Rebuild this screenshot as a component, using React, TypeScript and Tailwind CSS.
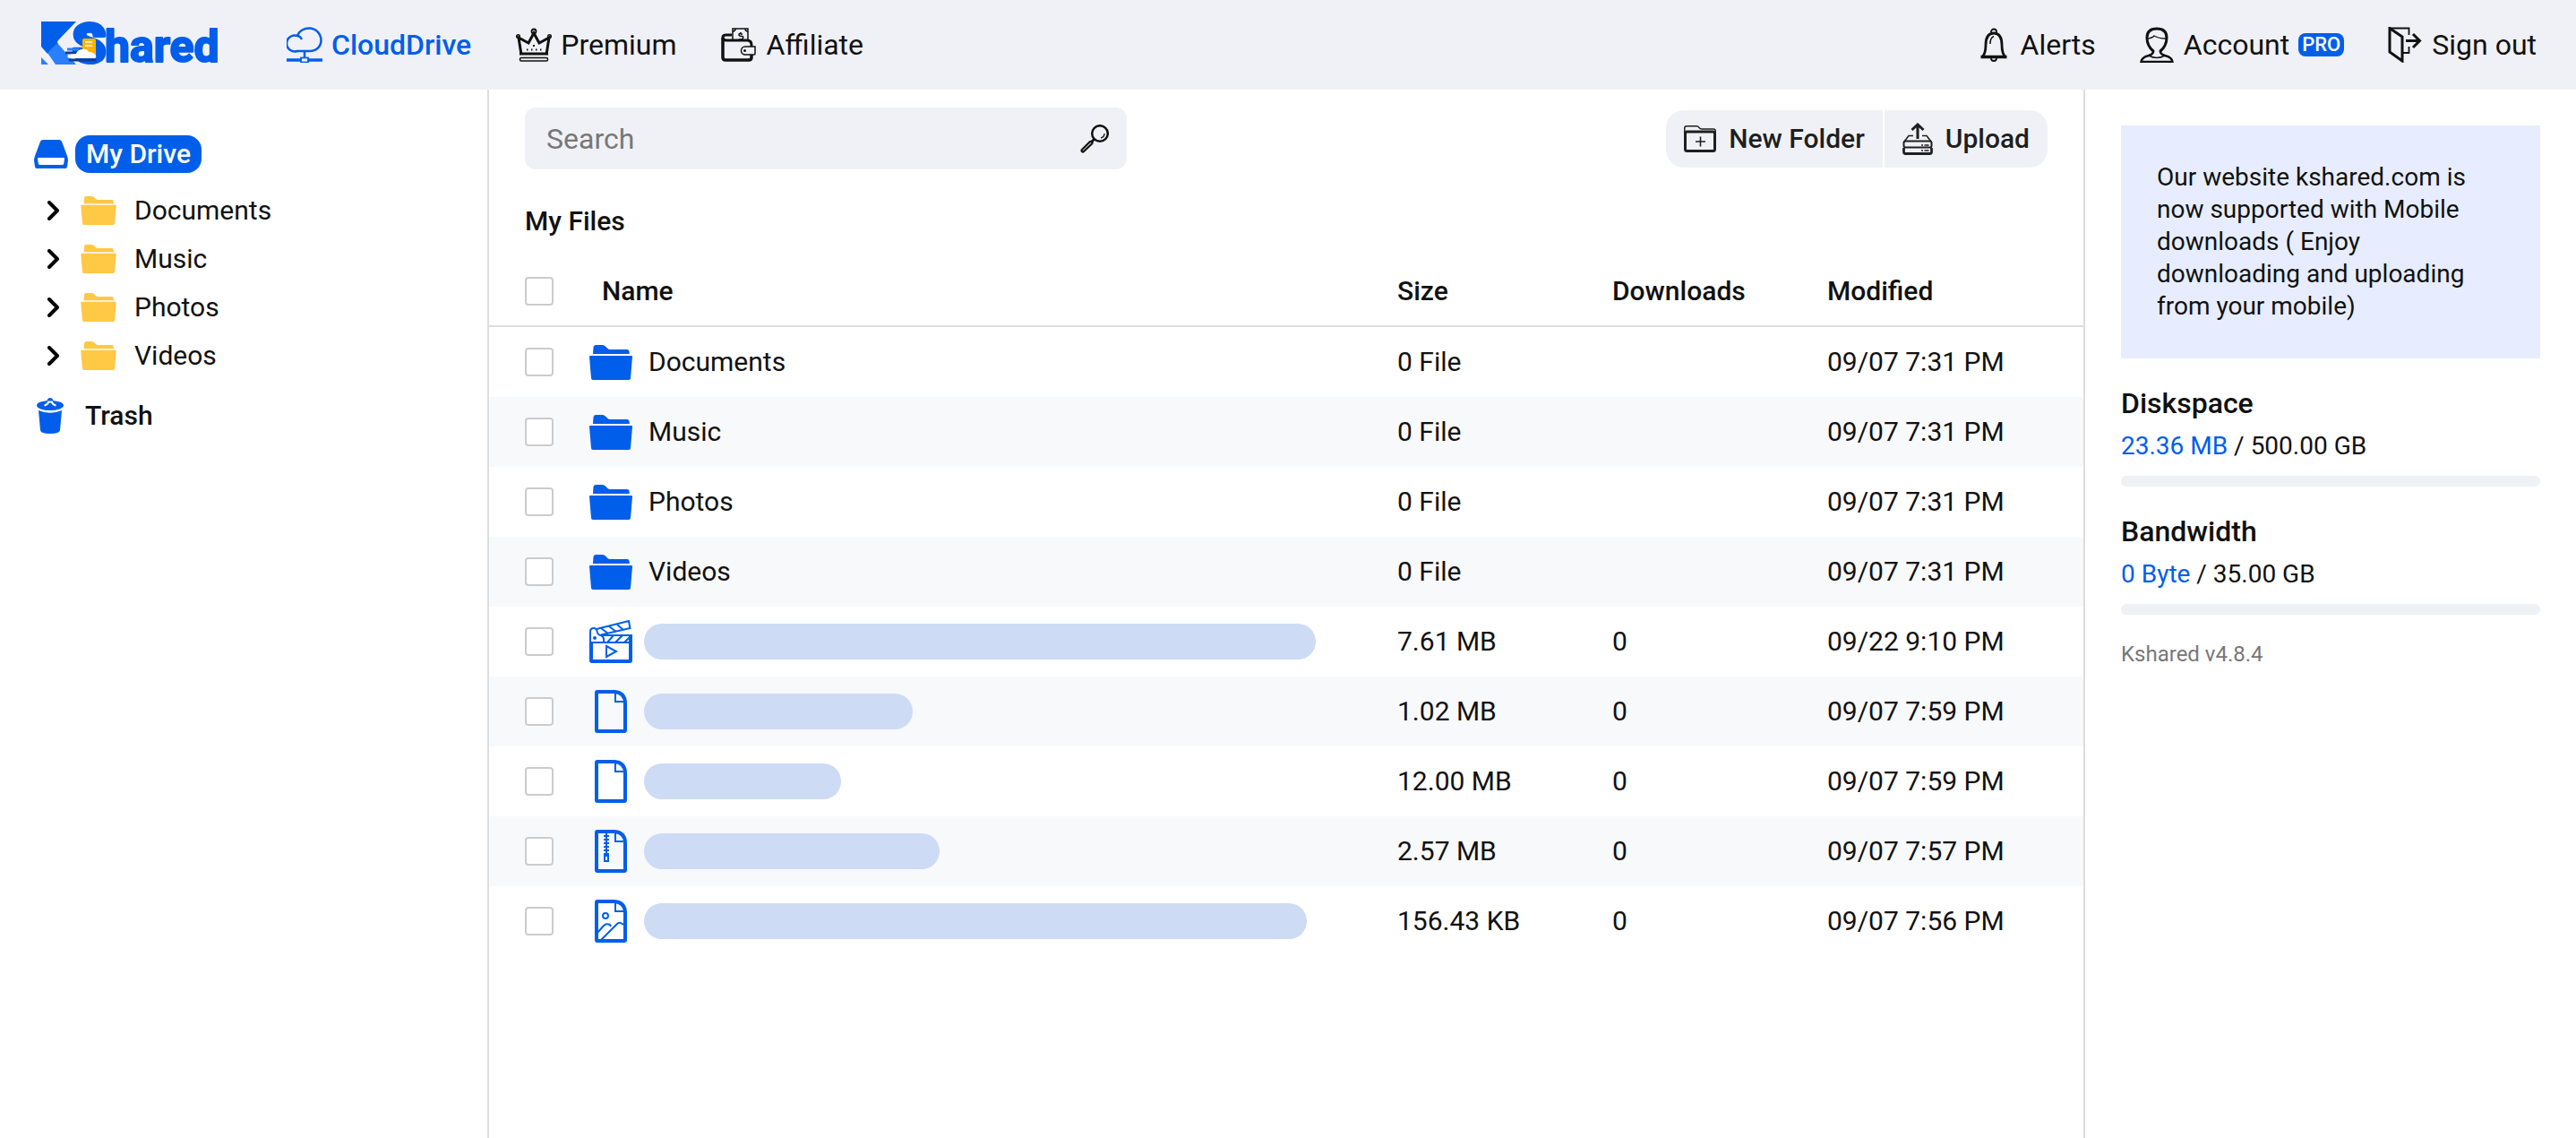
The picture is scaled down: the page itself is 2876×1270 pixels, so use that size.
import { useState, type ReactNode } from "react";

const TREE = ["Documents", "Music", "Photos", "Videos"];

type FileKind = "folder" | "video" | "file" | "zip" | "image";

interface Entry {
  id: string;
  kind: FileKind;
  name?: string;
  bar?: string;
  size: string;
  downloads: string;
  modified: string;
}

// Entries with a bar have their name hidden
const ENTRIES: Entry[] = [
  { id: "documents", kind: "folder", name: "Documents", size: "0 File", downloads: "", modified: "09/07 7:31 PM" },
  { id: "music",     kind: "folder", name: "Music",     size: "0 File", downloads: "", modified: "09/07 7:31 PM" },
  { id: "photos",    kind: "folder", name: "Photos",    size: "0 File", downloads: "", modified: "09/07 7:31 PM" },
  { id: "videos",    kind: "folder", name: "Videos",    size: "0 File", downloads: "", modified: "09/07 7:31 PM" },
  { id: "f1", kind: "video", bar: "w-[750px]", size: "7.61 MB",   downloads: "0", modified: "09/22 9:10 PM" },
  { id: "f2", kind: "file",  bar: "w-[300px]", size: "1.02 MB",   downloads: "0", modified: "09/07 7:59 PM" },
  { id: "f3", kind: "file",  bar: "w-[220px]", size: "12.00 MB",  downloads: "0", modified: "09/07 7:59 PM" },
  { id: "f4", kind: "zip",   bar: "w-[330px]", size: "2.57 MB",   downloads: "0", modified: "09/07 7:57 PM" },
  { id: "f5", kind: "image", bar: "w-[740px]", size: "156.43 KB", downloads: "0", modified: "09/07 7:56 PM" },
];

function Logo() {
  return (
    <svg viewBox="0 -13 204 80" className="h-20 w-[204px]" role="img" aria-label="KShared">
      <path d="M0 1h39L19 22q-2 2 0 4L7 37 0 29z" fill="#005eea" />
      <path d="M7 36 18 25l21 24H16z" fill="#2a7fff" />
      <path d="M0 41l8 8H0z" fill="#2a7fff" />
      <g fontFamily="Roboto, sans-serif" fill="#005eea" stroke="#005eea" strokeLinejoin="round">
        <text x="35" y="46" fontSize="59" fontWeight="900" strokeWidth="5">S</text>
        <text x="71" y="46" fontSize="50" fontWeight="700" strokeWidth="2">hared</text>
      </g>
      <path d="M48 20h11q2 0 2 2v18H46V22q0-2 2-2z" fill="#ffb300" />
      <path d="M49 24h8M49 28h8" stroke="#fff" strokeWidth="1.5" />
      <path d="M29 32h13" stroke="#2a7fff" strokeWidth="3" />
      <path d="M27 36h12" stroke="#0b3f91" strokeWidth="3" />
      <path d="M32 44h28" stroke="#0b3f91" strokeWidth="3" strokeLinecap="round" />
      <path d="M32 42q-4-1-2-3 2-2 9-2 2-5 7-5 5-1 7 3 6 0 8 4 1 3-2 3z" fill="#fff" />
    </svg>
  );
}

function CloudIcon() {
  return (
    <svg viewBox="0 0 40 40" className="size-10" fill="none" stroke="currentColor">
      <path d="M12 27A9 9 0 1 1 12 10C14 4 20 1.500 25 1.500 33 1.500 38.500 8 38.500 15S33 27 26 27z" strokeWidth="2.500" />
      <path d="M12 10q3 0 5 4" strokeWidth="2.500" />
      <path d="M20 27v7" strokeWidth="2.500" />
      <path d="M0 37h16M24 37h16" strokeWidth="3.500" />
      <rect x="16" y="34.500" width="8" height="5" strokeWidth="1.800" />
    </svg>
  );
}

function CrownIcon() {
  return (
    <svg viewBox="0 0 40 40" className="size-10" fill="none" stroke="currentColor">
      <circle cx="20" cy="5" r="2.500" strokeWidth="1.800" />
      <circle cx="2.500" cy="10.500" r="1.800" strokeWidth="1.500" />
      <circle cx="37.500" cy="10.500" r="1.800" strokeWidth="1.500" />
      <path d="M6 31 3 12l11 6 6-11 6 11 11-6-3 19" strokeWidth="3" />
      <path d="M4 30h32" strokeWidth="3" />
      <rect x="4.500" y="34.500" width="31" height="3.500" rx="1.500" strokeWidth="1.500" />
      <path d="M12 25.500h1.500M17 25.500h1.500M22 25.500h1.500M27 25.500h1.500M19 21h2" strokeWidth="2" />
    </svg>
  );
}

function WalletIcon() {
  return (
    <svg viewBox="0 0 40 40" className="size-10" fill="none" stroke="currentColor">
      <path d="M34 22v-2q0-5-5-5H6q-4 0-4-3.500Q2 9 6 9h6" strokeWidth="3" />
      <path d="M2 12v22q0 3 3 3h26q3 0 3-3v-3" strokeWidth="3.500" />
      <path d="M13 15V2h17v13" strokeWidth="1.500" />
      <path d="M13 5q3 0 3-3M30 5q-3 0-3-3" strokeWidth="1.500" />
      <path d="M24 8.500q-4-2-4 0t3 2 1 3-4 0M22 6v2M22 13v2" strokeWidth="1.500" />
      <path d="M38 22H27a4.500 4.500 0 0 0 0 9h10q1 0 1-1z" strokeWidth="1.500" />
      <circle cx="26.500" cy="26.500" r="1.500" fill="currentColor" stroke="none" />
    </svg>
  );
}

function BellIcon() {
  return (
    <svg viewBox="-4 0 40 40" className="size-10" fill="none" stroke="currentColor">
      <path d="M13 6V5.500a3 3 0 0 1 6 0V6" strokeWidth="1.800" />
      <path d="M3 33.500Q7 30 7 20 7 7 16 7t9 13q0 10 4 13.500" strokeWidth="2.800" />
      <path d="M1.500 33.500h29" strokeWidth="3.500" />
      <path d="M13 35a3 3 0 0 0 6 0" strokeWidth="1.800" />
      <path d="M12 19q0-7 4-8.500" strokeWidth="1.500" />
    </svg>
  );
}

function UserIcon() {
  return (
    <svg viewBox="-1 0 40 40" className="size-10" fill="none" stroke="currentColor">
      <path d="M15 27Q8 21 8 12 8 2 19 2t11 10q0 9-7 15" strokeWidth="3" />
      <path d="M8 13q5 0 8-3 5 3 13 3" strokeWidth="1.300" />
      <path d="M15 26q1 4-5 6-8 2-8.500 7h35q-.5-5-8.500-7-6-2-5-6" strokeWidth="2.500" />
      <path d="M10 32q9 5 18 0" strokeWidth="1.500" />
    </svg>
  );
}

function SignOutIcon() {
  return (
    <svg viewBox="-1 0 40 40" className="size-10" fill="none" stroke="currentColor">
      <path d="M2 1.500 16 11v27L2 28z" strokeWidth="3" />
      <path d="M2 1.500h21.500V9M23.500 22v7H17" strokeWidth="1.800" />
      <path d="M20 15.500h15" strokeWidth="3" />
      <path d="M28 8l7.500 7.500L28 23" strokeWidth="3" />
    </svg>
  );
}

function FolderIcon({ className }: { className: string }) {
  return (
    <svg viewBox="0 0 48 39" className={className} fill="currentColor">
      <path d="M4 10 4.500 2.500Q4.700 0 7 0h8q2 0 4 2.500T23 5h19q2.300 0 2.500 2l.3 3z" />
      <path d="M0 13q0-1 1-1h46q1 0 1 1l-2 24q-.2 2-2 2H4q-2 0-2-2z" />
    </svg>
  );
}

function DriveIcon() {
  return (
    <svg viewBox="0 0 38 32" className="h-8 w-[38px]">
      <path d="M10 0h18q2 0 3 2l6 16q1 3 1 5l-1 7q-.3 2-2 2H3q-1.700 0-2-2l-1-7q0-2 1-5L7 2q1-2 3-2z" fill="#005eea" />
      <path d="M5 20h28q1 0 1 1l-.8 5.500q-.2 1.500-1.700 1.500h-25Q5 28 4.800 26.500L4 21q0-1 1-1z" fill="#fff" />
    </svg>
  );
}

function TrashIcon() {
  return (
    <svg viewBox="0 0 30 40" className="h-10 w-[30px]">
      <ellipse cx="15" cy="8.500" rx="15" ry="5.500" fill="#005eea" />
      <path d="M8 6q3-1 4-4 .5-2 3-2t3 2q1 3 4 4z" fill="#005eea" />
      <path d="M8.500 8.500q4-1 4.500-4h4q.5 3 4.500 4" fill="none" stroke="#fff" strokeWidth="2" />
      <path d="M2 14q13 5.500 26 0l-2 22q-.3 4-11 4T4 36z" fill="#005eea" />
    </svg>
  );
}

function SearchIcon() {
  return (
    <svg viewBox="0 0 32 32" className="size-8" fill="none" stroke="currentColor">
      <circle cx="22" cy="10" r="8.800" strokeWidth="2.500" />
      <path d="M27 10q0 4-4 5" strokeWidth="1.300" />
      <path d="m15.500 16.500-2.500 2.500" strokeWidth="3" />
      <path d="M10.500 19.500 2 28q-1 1 0 2t2 0L13 21.500q1-1 0-2t-2.500 0z" strokeWidth="2.200" />
    </svg>
  );
}

function NewFolderIcon() {
  return (
    <svg viewBox="0 0 36 30" className="h-[30px] w-9" fill="none" stroke="currentColor">
      <path d="M.8 10V3Q.8.800 3 .8h11q2 0 3 1.600t3 1.600h13q2.200 0 2.200 2v4" strokeWidth="1.500" />
      <rect x="1.500" y="7" width="33" height="21.500" rx="2" strokeWidth="3" />
      <path d="M18.500 12.500v11M13 18h11" strokeWidth="1.600" />
    </svg>
  );
}

function UploadIcon() {
  return (
    <svg viewBox="0 0 34 36" className="h-9 w-[34px]" fill="none" stroke="currentColor">
      <path d="M17 18V3M10.500 8 17 2l6.500 6" strokeWidth="3" />
      <path d="M12 14.500H7L2 21M22 14.500h5l5 6.500" strokeWidth="1.600" />
      <rect x="1.500" y="20.500" width="31" height="7" rx="2" strokeWidth="2" />
      <path d="M1.500 28v4.500q0 2 2 2h27q2 0 2-2V28" strokeWidth="2.800" />
      <path d="M21 25h2M24.500 25h5M21 31h2M24.500 31h5" strokeWidth="1.500" />
    </svg>
  );
}

function ChevronIcon() {
  return (
    <svg viewBox="0 0 14 22" className="h-[22px] w-[14px]" fill="none" stroke="#000" strokeWidth="4" strokeLinecap="round" strokeLinejoin="round">
      <path d="m3 2 9 9-9 9" />
    </svg>
  );
}

function PageIcon({ children }: { children?: ReactNode }) {
  return (
    <svg viewBox="0 0 48 48" className="size-12" fill="none" stroke="currentColor">
      <path d="M9 2h19q12 1 12 13v30q0 1-1 1H9q-1 0-1-1V3q0-1 1-1z" strokeWidth="4" />
      <path d="M29 3v10h10" strokeWidth="2" />
      {children}
    </svg>
  );
}

function VideoIcon() {
  return (
    <svg viewBox="0 0 48 48" className="size-12" fill="none" stroke="currentColor">
      <path d="M2 25v20q0 1 1 1h42q1 0 1-1V17" strokeWidth="4" />
      <path d="M1 25h46V17H13" strokeWidth="2" />
      <path d="M1 25V13q0-4 4-4 3 0 4 5 1 3 4 3 4 2 3 8" strokeWidth="2" />
      <path d="M8 10 44 1l1.500 8L13 16.500" strokeWidth="2" />
      <path d="m13 9 8 6M22 7l8 6M31 5l7 6M27 17l-7 8M37 17l-8 8M47 17l-8 8" strokeWidth="2" />
      <circle cx="6" cy="20" r="2" fill="currentColor" stroke="none" />
      <path d="M19 29v12l11-6z" strokeWidth="2" />
    </svg>
  );
}

function EntryIcon({ kind }: { kind: FileKind }) {
  if (kind === "folder") return <FolderIcon className="h-[39px] w-12" />;
  if (kind === "video") return <VideoIcon />;
  if (kind === "zip") {
    return (
      <PageIcon>
        <path d="M19 4v24" strokeWidth="2" />
        <path d="M19 6v22" strokeWidth="6" strokeDasharray="2 2" />
        <path d="M17 29h4v6h-4z" strokeWidth="2" />
      </PageIcon>
    );
  }
  if (kind === "image") {
    return (
      <PageIcon>
        <circle cx="18" cy="18" r="3" strokeWidth="2" />
        <path d="m9 37 7-8q3-3 7-1l1 2M13 45l18-18q3-3 7 1" strokeWidth="2" />
      </PageIcon>
    );
  }
  return <PageIcon />;
}

function NavLink({ icon, active, children }: { icon: ReactNode; active?: boolean; children: ReactNode }) {
  return (
    <a
      href="#"
      className={`flex items-center gap-2.5 text-[32px] leading-10 ${active ? "font-medium text-[#005eea]" : ""}`}
    >
      {icon}
      {children}
    </a>
  );
}

function Usage({ title, used, total }: { title: string; used: string; total: string }) {
  return (
    <section className="mb-[30px]">
      <h2 className="text-[32px] leading-10 font-medium">{title}</h2>
      <p className="mt-2.5 mb-[15px] text-[28px] leading-9">
        <span className="text-[#005eea]">{used}</span> / {total}
      </p>
      <div role="progressbar" aria-label={title} aria-valuenow={0} className="h-3 rounded-md bg-[#f0f1f6]" />
    </section>
  );
}

const CHECKBOX = "block size-8 appearance-none rounded-sm border-2 border-[#cccccc] bg-white checked:bg-[#005eea]";

export default function App() {
  const [selected, setSelected] = useState<string[]>([]);
  const [query, setQuery] = useState("");

  const toggle = (id: string) =>
    setSelected((prev) => (prev.includes(id) ? prev.filter((x) => x !== id) : [...prev, id]));

  const allSelected = selected.length === ENTRIES.length;

  return (
    <div className="flex min-h-screen flex-col bg-white font-[Roboto,sans-serif] text-[30px] leading-9 text-[#111111]">
      {/* Top bar */}
      <header className="flex h-[100px] items-center justify-between bg-[#f0f1f6] pr-11 pl-[46px]">
        <div className="flex items-center">
          <a href="#" className="mr-[70px]"><Logo /></a>
          <nav className="flex items-center gap-[50px]">
            <NavLink icon={<CloudIcon />} active>CloudDrive</NavLink>
            <NavLink icon={<CrownIcon />}>Premium</NavLink>
            <NavLink icon={<WalletIcon />}>Affiliate</NavLink>
          </nav>
        </div>
        <nav className="flex items-center gap-12">
          <NavLink icon={<BellIcon />}>Alerts</NavLink>
          <NavLink icon={<UserIcon />}>
            Account
            <span className="rounded-lg bg-[#005eea] px-1 text-[22px] leading-[26px] font-medium text-white">PRO</span>
          </NavLink>
          <NavLink icon={<SignOutIcon />}>Sign out</NavLink>
        </nav>
      </header>

      <div className="flex flex-1">
        {/* Folder tree */}
        <aside className="w-[546px] shrink-0 border-r-2 border-[#dddddd] pt-[51px] pl-[38px]">
          <a href="#" className="flex items-center gap-2 font-medium">
            <DriveIcon />
            <span className="rounded-2xl bg-[#005eea] px-3 leading-[42px] text-white">My Drive</span>
          </a>
          <ul className="mt-[15px]">
            {TREE.map((name) => (
              <li key={name} className="flex h-[54px] items-center pl-3.5">
                <button aria-label={`Expand ${name}`} className="mr-6"><ChevronIcon /></button>
                <a href="#" className="flex items-center gap-5">
                  <FolderIcon className="h-8 w-10 text-[#ffc845]" />
                  {name}
                </a>
              </li>
            ))}
          </ul>
          <a href="#" className="mt-5 flex items-center gap-6 pl-[3px] font-medium">
            <TrashIcon />
            Trash
          </a>
        </aside>

        {/* File list */}
        <main className="min-w-0 flex-1 pt-5">
          <div className="flex items-center justify-between px-10">
            <label className="flex h-[69px] w-[672px] items-center rounded-xl bg-[#f0f1f6] pr-5 pl-6">
              <input
                type="search"
                aria-label="Search"
                placeholder="Search"
                value={query}
                onChange={(e) => setQuery(e.target.value)}
                className="min-w-0 flex-1 bg-transparent text-[32px] leading-10 outline-none placeholder:text-[#777777]"
              />
              <SearchIcon />
            </label>
            <div className="flex gap-0.5 font-medium text-[#1f1f1f]">
              <button className="flex h-16 items-center gap-3.5 rounded-l-[20px] bg-[#f0f1f6] px-5">
                <NewFolderIcon />
                New Folder
              </button>
              <button className="flex h-16 items-center gap-3.5 rounded-r-[20px] bg-[#f0f1f6] px-5">
                <UploadIcon />
                Upload
              </button>
            </div>
          </div>

          <h1 className="px-10 pt-10 pb-[22px] font-medium">My Files</h1>

          <table className="w-full table-fixed border-separate border-spacing-0 text-left">
            <colgroup>
              <col className="w-28" />
              <col />
              <col className="w-60" />
              <col className="w-60" />
              <col className="w-[286px]" />
            </colgroup>
            <thead>
              <tr className="h-[78px] *:border-b-2 *:border-[#dddddd] *:font-medium">
                <th className="pl-10">
                  <input
                    type="checkbox"
                    aria-label="Select all"
                    checked={allSelected}
                    onChange={() => setSelected(allSelected ? [] : ENTRIES.map((e) => e.id))}
                    className={CHECKBOX}
                  />
                </th>
                <th className="pl-3.5">Name</th>
                <th>Size</th>
                <th>Downloads</th>
                <th>Modified</th>
              </tr>
            </thead>
            <tbody>
              {ENTRIES.map((entry) => (
                <tr key={entry.id} className="h-[78px] even:bg-[#f8f9fb]">
                  <td className="pl-10">
                    <input
                      type="checkbox"
                      aria-label={`Select ${entry.name ?? "file"}`}
                      checked={selected.includes(entry.id)}
                      onChange={() => toggle(entry.id)}
                      className={CHECKBOX}
                    />
                  </td>
                  <td>
                    <div className="flex items-center text-[#005eea]">
                      <EntryIcon kind={entry.kind} />
                      {entry.bar ? (
                        <span className={`ml-[13px] h-10 rounded-full bg-[#cddbf5] ${entry.bar}`} />
                      ) : (
                        <a href="#" className="ml-[18px] text-[#111111]">{entry.name}</a>
                      )}
                    </div>
                  </td>
                  <td>{entry.size}</td>
                  <td>{entry.downloads}</td>
                  <td>{entry.modified}</td>
                </tr>
              ))}
            </tbody>
          </table>
        </main>

        {/* Account usage */}
        <aside className="w-[550px] shrink-0 border-l-2 border-[#dddddd] p-10">
          <p className="mb-[30px] bg-[#e7edfe] p-10 text-[28px] leading-9">
            Our website kshared.com is now supported with Mobile downloads ( Enjoy downloading and uploading from your
            mobile)
          </p>
          <Usage title="Diskspace" used="23.36 MB" total="500.00 GB" />
          <Usage title="Bandwidth" used="0 Byte" total="35.00 GB" />
          <p className="text-[24px] leading-7 text-[#777777]">Kshared v4.8.4</p>
        </aside>
      </div>
    </div>
  );
}
